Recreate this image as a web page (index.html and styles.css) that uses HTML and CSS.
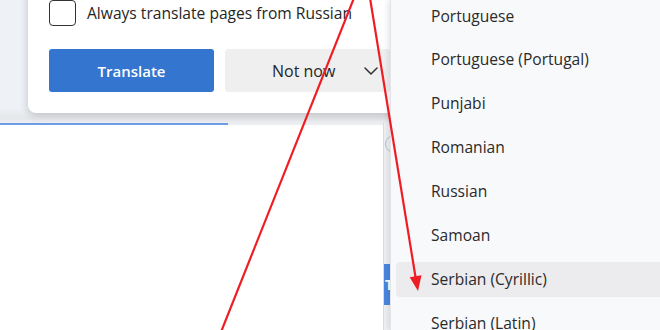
FILE: index.html
```html
<!DOCTYPE html>
<html lang="en">
<head>
    <meta charset="UTF-8">
    <meta name="viewport" content="width=device-width, initial-scale=1.0">
    <title>Translate page</title>
    <link rel="stylesheet" href="styles.css">
</head>
<body>
    <div class="browser">
        <div class="toolbar"></div>
        <div class="page">
            <div class="sheet">
                <div class="tab-strip">
                    <span class="tab-line"></span>
                    <span class="tab-rest"></span>
                </div>
            </div>
            <div class="rail">
                <span class="rail-circle"></span>
                <span class="rail-btn">T</span>
            </div>
        </div>
    </div>

    <!-- translate popup -->
    <div class="translate-card">
        <label class="always">
            <span class="checkbox"></span>
            <span>Always translate pages from Russian</span>
        </label>
        <div class="actions">
            <button class="btn primary">Translate</button>
            <button class="btn secondary">
                <span class="btn-label">Not now</span>
                <svg class="chevron" width="14" height="8" viewBox="0 0 14 8">
                    <path d="M1 1 L7 7 L13 1" fill="none" stroke="#333" stroke-width="1.5" stroke-linecap="round" stroke-linejoin="round"/>
                </svg>
            </button>
        </div>
    </div>

    <!-- language list -->
    <div class="lang-menu">
        <ul class="lang-list">
            <li>Portuguese</li>
            <li>Portuguese (Portugal)</li>
            <li>Punjabi</li>
            <li>Romanian</li>
            <li>Russian</li>
            <li>Samoan</li>
            <li class="active">Serbian (Cyrillic)</li>
            <li>Serbian (Latin)</li>
        </ul>
    </div>

    <!-- red annotation arrows -->
    <svg class="arrows" width="660" height="330" viewBox="0 0 660 330">
        <line x1="354" y1="-2" x2="221" y2="332" stroke="#ee1d24" stroke-width="2.2"/>
        <line x1="370" y1="-2" x2="416" y2="280" stroke="#ee1d24" stroke-width="2.2"/>
        <polygon points="418,291 409.7,277.2 421.5,275.2" fill="#ee1d24"/>
    </svg>
</body>
</html>
```

FILE: styles.css
```css
body {
    margin: 0;
    padding: 0;
    width: 660px;
    height: 330px;
    overflow: hidden;
    position: relative;
    background-color: #eceff4;
    font-family: 'Open Sans', 'Noto Sans', sans-serif;
    color: #262626;
}

.browser {
    display: flex;
    flex-direction: column;
    height: 100%;
}

.toolbar {
    height: 123px;
    background: linear-gradient(#eef1f6 0, #eef1f6 108px, #e5e7ea 118px, #eceef1 123px);
}

.page {
    flex: 1;
    display: flex;
}

.sheet {
    width: 383px;
    background-color: #ffffff;
    border-right: 1px solid #d9dbdf;
}

.tab-strip {
    display: flex;
    height: 2px;
}

.tab-line {
    width: 228px;
    background-color: #6d9be6;
}

.tab-rest {
    flex: 1;
    background-color: #eceef1;
}

.rail {
    flex: 1;
    display: flex;
    flex-direction: column;
    background-color: #eef0f4;
    overflow: hidden;
}

.rail-circle {
    width: 16px;
    height: 16px;
    margin: 12px 0 0 1px;
    border: 1.5px solid #b8c2d2;
    border-radius: 50%;
    flex-shrink: 0;
}

.rail-btn {
    margin-top: 111px;
    width: 6px;
    height: 41px;
    padding-left: 1px;
    background-color: #4a86df;
    color: #ffffff;
    font-size: 14px;
    font-weight: bold;
    line-height: 41px;
    overflow: hidden;
}

/* translate popup */
.translate-card {
    position: absolute;
    left: 28px;
    top: -20px;
    width: 380px;
    padding: 20px 21px 21px;
    background-color: #ffffff;
    border-radius: 8px;
    box-shadow: 0 2px 8px rgba(0, 0, 0, 0.2);
}

.always {
    display: flex;
    align-items: center;
    gap: 11px;
    height: 26px;
    font-size: 15.6px;
    color: #262626;
}

.checkbox {
    width: 25px;
    height: 24px;
    border: 1.5px solid #333333;
    border-radius: 4px;
}

.actions {
    display: flex;
    gap: 11px;
    margin-top: 23px;
}

.btn {
    width: 165px;
    height: 43px;
    border: none;
    border-radius: 3px;
    font-family: inherit;
    font-size: 16px;
}

.primary {
    background-color: #3375cf;
    color: #ffffff;
    font-size: 15px;
    font-weight: 600;
}

.secondary {
    display: flex;
    align-items: center;
    background-color: #efefef;
    color: #262626;
    padding: 0 0 0 47px;
}

.chevron {
    margin-left: 29px;
}

/* language list */
.lang-menu {
    position: absolute;
    left: 390px;
    top: 0;
    right: 0;
    bottom: 0;
    background-color: #f8f9fb;
    border-left: 1px solid #e2e4e8;
    box-shadow: -2px 0 6px rgba(0, 0, 0, 0.1);
}

.lang-list {
    list-style: none;
    margin: -1.5px 0 0 5px;
    padding: 0;
    display: flex;
    flex-direction: column;
    gap: 8.9px;
}

.lang-list li {
    height: 35px;
    line-height: 35px;
    padding-left: 35px;
    font-size: 15.6px;
    color: #2a2a2a;
    border-radius: 4px 0 0 4px;
}

.lang-list li.active {
    background-color: #ececee;
}

.arrows {
    position: absolute;
    left: 0;
    top: 0;
    pointer-events: none;
}
```
